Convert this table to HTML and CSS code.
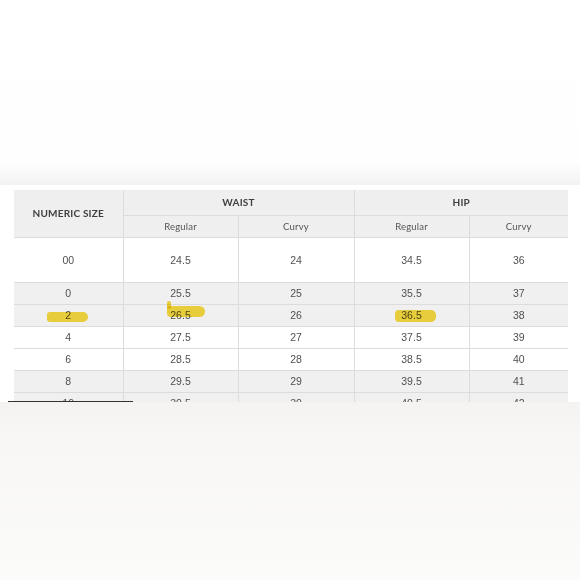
FILE: index.html
```html
<!DOCTYPE html>
<html>
<head>
<meta charset="utf-8">
<link rel="stylesheet" href="styles.css">
</head>
<body>
<div class="top"></div>
<div class="sheet">
  <div class="wrap">
    <table class="sizes">
      <colgroup>
        <col class="c1"><col class="c2"><col class="c3"><col class="c4"><col class="c5">
      </colgroup>
      <thead>
        <tr class="h1">
          <th rowspan="2" class="num">NUMERIC SIZE</th>
          <th colspan="2">WAIST</th>
          <th colspan="2">HIP</th>
        </tr>
        <tr class="h2">
          <th>Regular</th><th>Curvy</th><th>Regular</th><th>Curvy</th>
        </tr>
      </thead>
      <tbody>
        <tr class="tall"><td>00</td><td>24.5</td><td>24</td><td>34.5</td><td>36</td></tr>
        <tr class="grey"><td>0</td><td>25.5</td><td>25</td><td>35.5</td><td>37</td></tr>
        <tr class="grey"><td>2</td><td>26.5</td><td>26</td><td>36.5</td><td>38</td></tr>
        <tr><td>4</td><td>27.5</td><td>27</td><td>37.5</td><td>39</td></tr>
        <tr><td>6</td><td>28.5</td><td>28</td><td>38.5</td><td>40</td></tr>
        <tr class="grey"><td>8</td><td>29.5</td><td>29</td><td>39.5</td><td>41</td></tr>
        <tr class="grey"><td>10</td><td>30.5</td><td>30</td><td>40.5</td><td>42</td></tr>
      </tbody>
    </table>
    <span class="mark m1"></span>
    <span class="mark m2"></span>
    <span class="mark m2b"></span>
    <span class="mark m3"></span>
  </div>
</div>
<div class="bottom"><div class="rule"></div></div>
</body>
</html>
```
FILE: styles.css
```css
html, body {
  margin: 0;
  padding: 0;
  background: #ffffff;
}
.top {
  height: 185px;
  background: linear-gradient(to bottom, #ffffff 0%, #fefefe 88%, #f6f6f6 96%, #f2f2f2 100%);
}
.sheet {
  height: 217px;
  background: #ffffff;
  overflow: hidden;
  padding-top: 5px;
  box-sizing: border-box;
}
.wrap {
  position: relative;
  margin-left: 14px;
  width: 554px;
}
.sizes {
  border-collapse: collapse;
  table-layout: fixed;
  width: 554px;
  font-family: "Lato", "Liberation Sans", sans-serif;
  color: #555;
}
.c1 { width: 109px; }
.c2 { width: 115px; }
.c3 { width: 116px; }
.c4 { width: 115px; }
.c5 { width: 99px; }
.sizes th, .sizes td {
  border: 1px solid #dcdcdc;
  text-align: center;
  padding: 0;
}
.sizes th {
  background: #efefef;
  font-weight: 700;
  font-size: 10px;
  color: #3f3f3f;
  letter-spacing: 0.2px;
}
.sizes tr:first-child th {
  border-top: none;
}
.sizes th:first-child, .sizes td:first-child {
  border-left: none;
}
.sizes th:last-child, .sizes td:last-child {
  border-right: none;
}
.h1 { height: 25px; }
.h2 { height: 22px; }
.sizes .h2 th {
  font-weight: 400;
  color: #555;
  font-size: 9.5px;
}
.sizes th.num {
  font-size: 10px;
}
.sizes td {
  height: 21px;
  font-size: 10.5px;
  font-family: "Liberation Sans", "Lato", sans-serif;
  color: #505050;
}
.sizes tr.tall td {
  height: 44px;
}
.sizes tr.grey td {
  background: #f0f0f0;
}
.mark {
  position: absolute;
  background: #f5d21c;
  opacity: 0.85;
  mix-blend-mode: multiply;
  border-radius: 3px 5px 5px 3px;
}
.m1 { left: 33px; top: 122px; width: 41px; height: 10px; }
.m2 { left: 153px; top: 116px; width: 38px; height: 11px; border-radius: 2px 6px 6px 4px; }
.m2b { left: 153px; top: 111px; width: 4px; height: 8px; border-radius: 2px; }
.m3 { left: 381px; top: 120px; width: 41px; height: 12px; border-radius: 4px 5px 5px 4px; }
.bottom {
  height: 178px;
  position: relative;
  background: linear-gradient(to bottom, #f4f3f1 0%, #f8f7f5 20%, #fbfbfa 100%);
}
.rule {
  position: absolute;
  left: 8px;
  top: -1px;
  width: 125px;
  height: 1px;
  background: #333;
}
```
